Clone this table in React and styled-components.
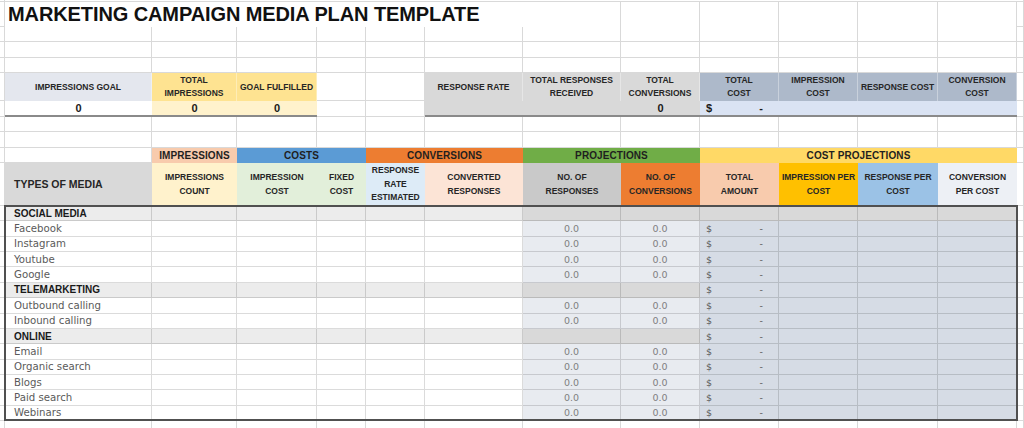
import React from "react";
import styled, { createGlobalStyle } from "styled-components";

// column widths measured off the sheet: row gutter, A..L, right gutter
const COLUMNS = "5px 147px 85px 80px 49px 59px 98px 98px 79px 79px 79px 80px 79px 7px";
const GRID = "#d9d9d9";
const HEAD_FONT = `"Liberation Sans", Arial, sans-serif`;
const BODY_FONT = `"DejaVu Sans", Verdana, sans-serif`;

const GlobalStyle = createGlobalStyle`
  html, body {
    margin: 0;
    padding: 0;
    background: #ffffff;
  }
  body {
    font-family: ${HEAD_FONT};
    overflow: hidden;
  }
`;

const Sheet = styled.div`
  width: 1024px;
  height: 428px;
  overflow: hidden;
  background: #ffffff;
`;

const Row = styled.div`
  display: grid;
  grid-template-columns: ${COLUMNS};
  height: ${(p) => p.$h}px;
`;

const Gutter = styled.div`
  box-sizing: border-box;
  border-right: 1px solid ${GRID};
  border-bottom: 1px solid ${GRID};
  background: #ffffff;
`;

const Blank = styled.div`
  box-sizing: border-box;
  grid-column: span ${(p) => p.$span || 1};
  border-right: ${(p) => (p.$noRight ? "none" : `1px solid ${GRID}`)};
  border-bottom: ${(p) => (p.$noBottom ? "none" : `1px solid ${GRID}`)};
  background: #ffffff;
`;

const TitleCell = styled.div`
  grid-column: span 6;
  display: flex;
  align-items: center;
  padding-left: 3px;
  overflow: visible;
  white-space: nowrap;
  font-family: ${HEAD_FONT};
  font-weight: 700;
  font-size: 20px;
  letter-spacing: -0.1px;
  color: #111111;
`;

const KpiLabel = styled.div`
  box-sizing: border-box;
  display: flex;
  align-items: center;
  justify-content: center;
  text-align: center;
  background: ${(p) => p.$bg};
  border-right: 1px solid rgba(255, 255, 255, 0.35);
  font-size: 8.5px;
  line-height: 13px;
  font-weight: 700;
  color: #262626;
`;

const KpiValue = styled.div`
  box-sizing: border-box;
  display: flex;
  align-items: center;
  justify-content: ${(p) => (p.$money ? "space-between" : "center")};
  padding: ${(p) => (p.$money ? "0 16px 0 6px" : "0")};
  background: ${(p) => p.$bg};
  border-bottom: 2px solid #8a8a8a;
  font-size: 11px;
  font-weight: 700;
  color: #1a1a1a;
`;

const GroupHead = styled.div`
  grid-column: span ${(p) => p.$span || 1};
  display: flex;
  align-items: center;
  justify-content: center;
  background: ${(p) => p.$bg};
  font-size: 10px;
  font-weight: 700;
  letter-spacing: 0.1px;
  color: #1f1f1f;
`;

const ColHead = styled.div`
  box-sizing: border-box;
  display: flex;
  align-items: center;
  justify-content: ${(p) => (p.$left ? "flex-start" : "center")};
  padding-left: ${(p) => (p.$left ? "9px" : "0")};
  text-align: center;
  background: ${(p) => p.$bg};
  font-size: ${(p) => (p.$left ? "10.5px" : "8.5px")};
  line-height: 13.5px;
  font-weight: 700;
  color: #262626;
`;

const TableFrame = styled.div`
  position: relative;

  &::after {
    content: "";
    position: absolute;
    left: 4px;
    right: 6px;
    top: -1px;
    bottom: 0;
    border: 2px solid #505050;
    pointer-events: none;
  }
`;

const LINE = "rgba(0, 0, 0, 0.14)";

const MediaName = styled.div`
  box-sizing: border-box;
  display: flex;
  align-items: center;
  padding-left: 9px;
  background: ${(p) => (p.$group ? "#ececec" : "#ffffff")};
  border-right: 1px solid ${LINE};
  border-bottom: 1px solid ${LINE};
  white-space: nowrap;
  font-family: ${(p) => (p.$group ? HEAD_FONT : BODY_FONT)};
  font-size: ${(p) => (p.$group ? "10px" : "10.2px")};
  font-weight: ${(p) => (p.$group ? 700 : 400)};
  color: ${(p) => (p.$group ? "#1a1a1a" : "#5a5a5a")};
`;

const DataCell = styled.div`
  box-sizing: border-box;
  display: flex;
  align-items: center;
  justify-content: center;
  background: ${(p) => p.$bg};
  border-right: 1px solid ${LINE};
  border-bottom: 1px solid ${LINE};
  font-family: ${BODY_FONT};
  font-size: 9.5px;
  color: #808080;
`;

const MoneyCell = styled(DataCell)`
  justify-content: space-between;
  padding: 0 15px 0 6px;
  color: #595959;
`;

const kpiLeft = [
  { label: "IMPRESSIONS GOAL", bg: "#e4e7ee", valueBg: "#ffffff", value: "0" },
  { label: ["TOTAL", "IMPRESSIONS"], bg: "#fee391", valueBg: "#fff2cc", value: "0" },
  { label: "GOAL FULFILLED", bg: "#fee391", valueBg: "#fff2cc", value: "0" },
];

const kpiRight = [
  { label: "RESPONSE RATE", bg: "#d9d9d9", valueBg: "#d9d9d9" },
  { label: ["TOTAL RESPONSES", "RECEIVED"], bg: "#d9d9d9", valueBg: "#d9d9d9" },
  { label: ["TOTAL", "CONVERSIONS"], bg: "#d9d9d9", valueBg: "#d9d9d9", value: "0" },
  { label: ["TOTAL", "COST"], bg: "#adb9ca", valueBg: "#dae3f3", money: true },
  { label: ["IMPRESSION", "COST"], bg: "#adb9ca", valueBg: "#dae3f3" },
  { label: "RESPONSE COST", bg: "#adb9ca", valueBg: "#dae3f3" },
  { label: ["CONVERSION", "COST"], bg: "#adb9ca", valueBg: "#dae3f3" },
];

const groups = [
  { label: "IMPRESSIONS", span: 1, bg: "#f8cbad" },
  { label: "COSTS", span: 2, bg: "#5b9bd5" },
  { label: "CONVERSIONS", span: 2, bg: "#ed7d31" },
  { label: "PROJECTIONS", span: 2, bg: "#70ad47" },
  { label: "COST PROJECTIONS", span: 4, bg: "#ffd966" },
];

const columns = [
  { label: ["IMPRESSIONS", "COUNT"], bg: "#fff2cc" },
  { label: ["IMPRESSION", "COST"], bg: "#e2efda" },
  { label: ["FIXED", "COST"], bg: "#e2efda" },
  { label: ["RESPONSE", "RATE", "ESTIMATED"], bg: "#ddebf7" },
  { label: ["CONVERTED", "RESPONSES"], bg: "#fce4d6" },
  { label: ["NO. OF", "RESPONSES"], bg: "#c9c9c9" },
  { label: ["NO. OF", "CONVERSIONS"], bg: "#ed7d31" },
  { label: ["TOTAL", "AMOUNT"], bg: "#f8cbad" },
  { label: ["IMPRESSION PER", "COST"], bg: "#ffc000" },
  { label: ["RESPONSE PER", "COST"], bg: "#9bc2e6" },
  { label: ["CONVERSION", "PER COST"], bg: "#edf0f5" },
];

const media = [
  { name: "SOCIAL MEDIA", group: true, first: true },
  { name: "Facebook" },
  { name: "Instagram" },
  { name: "Youtube" },
  { name: "Google" },
  { name: "TELEMARKETING", group: true },
  { name: "Outbound calling" },
  { name: "Inbound calling" },
  { name: "ONLINE", group: true },
  { name: "Email" },
  { name: "Organic search" },
  { name: "Blogs" },
  { name: "Paid search" },
  { name: "Webinars" },
];

const Lines = ({ text }) =>
  Array.isArray(text) ? (
    <span>
      {text.map((t, i) => (
        <React.Fragment key={i}>
          {i > 0 && <br />}
          {t}
        </React.Fragment>
      ))}
    </span>
  ) : (
    <span>{text}</span>
  );

const EmptyRow = ({ h }) => (
  <Row $h={h}>
    <Gutter />
    {Array.from({ length: 12 }).map((_, i) => (
      <Blank key={i} />
    ))}
    <Gutter />
  </Row>
);

const MediaRow = ({ item }) => {
  const grey = "#d9d9d9";
  const plain = item.group ? "#ececec" : "#ffffff";
  const proj = item.group ? grey : "#e8ebf0";
  const cost = item.first ? grey : "#d6dce5";
  return (
    <Row $h={15.36}>
      <Gutter />
      <MediaName $group={item.group}>{item.name}</MediaName>
      {[0, 1, 2, 3, 4].map((i) => (
        <DataCell key={i} $bg={plain} />
      ))}
      <DataCell $bg={proj}>{item.group ? "" : "0.0"}</DataCell>
      <DataCell $bg={proj}>{item.group ? "" : "0.0"}</DataCell>
      {item.first ? (
        <DataCell $bg={cost} />
      ) : (
        <MoneyCell $bg={cost}>
          <span>$</span>
          <span>-</span>
        </MoneyCell>
      )}
      <DataCell $bg={cost} />
      <DataCell $bg={cost} />
      <DataCell $bg={cost} />
      <Gutter />
    </Row>
  );
};

export default function App() {
  return (
    <>
      <GlobalStyle />
      <Sheet>
        <Row $h={2}>
          <Gutter />
          <Blank $span={12} $noRight />
          <Gutter />
        </Row>
        <Row $h={25}>
          <Gutter />
          <TitleCell>MARKETING CAMPAIGN MEDIA PLAN TEMPLATE</TitleCell>
          {Array.from({ length: 6 }).map((_, i) => (
            <Blank key={i} $noBottom />
          ))}
          <Gutter />
        </Row>
        <EmptyRow h={15} />
        <EmptyRow h={16} />
        <EmptyRow h={15} />

        <Row $h={28}>
          <Gutter />
          {kpiLeft.map((k, i) => (
            <KpiLabel key={i} $bg={k.bg}>
              <Lines text={k.label} />
            </KpiLabel>
          ))}
          <Blank />
          <Blank />
          {kpiRight.map((k, i) => (
            <KpiLabel key={i} $bg={k.bg}>
              <Lines text={k.label} />
            </KpiLabel>
          ))}
          <Gutter />
        </Row>
        <Row $h={16}>
          <Gutter />
          {kpiLeft.map((k, i) => (
            <KpiValue key={i} $bg={k.valueBg}>
              {k.value}
            </KpiValue>
          ))}
          <Blank />
          <Blank />
          {kpiRight.map((k, i) =>
            k.money ? (
              <KpiValue key={i} $bg={k.valueBg} $money>
                <span>$</span>
                <span>-</span>
              </KpiValue>
            ) : (
              <KpiValue key={i} $bg={k.valueBg}>
                {k.value}
              </KpiValue>
            )
          )}
          <Gutter />
        </Row>
        <EmptyRow h={15} />
        <EmptyRow h={16} />

        <Row $h={15}>
          <Gutter />
          <Blank />
          {groups.map((g) => (
            <GroupHead key={g.label} $span={g.span} $bg={g.bg}>
              {g.label}
            </GroupHead>
          ))}
          <Gutter />
        </Row>
        <Row $h={43}>
          <Gutter />
          <ColHead $left $bg="#d9d9d9">
            TYPES OF MEDIA
          </ColHead>
          {columns.map((c, i) => (
            <ColHead key={i} $bg={c.bg}>
              <Lines text={c.label} />
            </ColHead>
          ))}
          <Gutter />
        </Row>

        <TableFrame>
          {media.map((m) => (
            <MediaRow key={m.name} item={m} />
          ))}
        </TableFrame>
        <EmptyRow h={16} />
      </Sheet>
    </>
  );
}
